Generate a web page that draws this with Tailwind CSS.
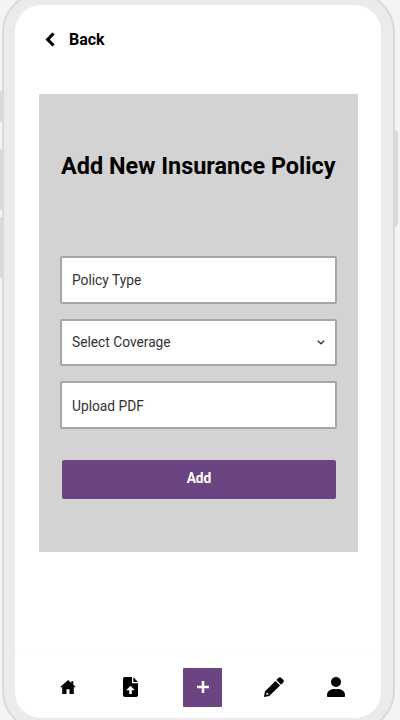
<!DOCTYPE html>
<html lang="en">
<head>
  <meta charset="UTF-8">
  <meta name="viewport" content="width=device-width, initial-scale=1.0" />
  <title>Add New Insurance Policy</title>
  <script src="https://cdn.jsdelivr.net/npm/@tailwindcss/browser@4"></script>
</head>
<body class="bg-[#f4f4f4] font-['Roboto',sans-serif] text-black">
  <div class="relative w-[400px] h-[720px] overflow-hidden">
    <!-- Side buttons of the phone -->
    <div class="absolute left-0 top-[91px] w-[2px] h-[31px] bg-[#dadada]"></div>
    <div class="absolute left-0 top-[149px] w-[2px] h-[61px] bg-[#dadada]"></div>
    <div class="absolute left-0 top-[217px] w-[2px] h-[61px] bg-[#dadada]"></div>
    <div class="absolute left-[394px] top-[130px] w-[4px] h-[97px] rounded-r-sm bg-[#dadada]"></div>

    <div class="relative -mt-2 ml-0.5 w-[393px] h-[739px] px-[11px] pt-[11px] border-2 border-[#dadada] rounded-[40px] bg-[#ebebeb]">
      <div class="flex flex-col w-[366px] h-[713px] rounded-[26px] bg-white">
        <header class="flex items-center h-[69px] pl-[30px]">
          <svg class="w-[10px] h-[15px]" viewBox="0 0 10 15" fill="none" stroke="currentColor" stroke-width="3.2">
            <path d="M8.5 1.5 2.7 7.5l5.8 6" />
          </svg>
          <a href="#" class="ml-[14px] text-[16px] leading-none font-bold">Back</a>
        </header>

        <main class="mt-5 ml-6 w-[318.5px] h-[458px] rounded-[1px] bg-[#d3d3d3] px-[21px]">
          <h1 class="pt-[58px] h-[162px] text-[23.45px] leading-7 font-bold text-center whitespace-nowrap">Add New Insurance Policy</h1>
          <form onsubmit="return false;">
            <div class="flex items-center h-[47.5px] px-[10px] pt-[2px] border-2 border-[#a6a6a6] rounded-[2px] bg-white text-[13.75px] text-[#333]">Policy Type</div>
            <div class="flex items-center justify-between mt-[15px] h-[47.5px] px-[10px] border-2 border-[#a6a6a6] rounded-[2px] bg-white text-[13.75px] text-[#333]">
              <span>Select Coverage</span>
              <svg class="w-[8px] h-[5px]" viewBox="0 0 8 5" fill="none" stroke="currentColor" stroke-width="1.3">
                <path d="M.8.8 4 3.8 7.2.8" />
              </svg>
            </div>
            <div class="flex items-center mt-[15px] h-[47.5px] px-[10px] pt-[3px] border-2 border-[#a6a6a6] rounded-[2px] bg-white text-[13.75px] text-[#333]">Upload PDF</div>
            <button type="submit" class="block mt-[31px] ml-[2px] w-[274px] h-[39px] rounded-[2px] bg-[#6b4482] text-white text-[13.75px] leading-none font-bold">Add</button>
          </form>
        </main>

        <nav class="mt-auto h-[63px] border-t border-[#fcfcfc] flex items-center pl-[45px]">
          <svg class="w-[16px] h-[14px]" viewBox="0 0 16 14" fill="currentColor">
            <path d="M8 0 0 7.3h2.2V14h4.3V9.3h3V14h4.3V7.3H16L13.3 4.8V1.3h-2v1.7z" />
          </svg>
          <svg class="ml-[47px] w-[15px] h-[20px]" viewBox="0 0 15 20" fill="currentColor">
            <path fill-rule="evenodd" d="M1.8 0H9v6.2h6V18.2q0 1.8-1.8 1.8H1.8Q0 20 0 18.2V1.8Q0 0 1.8 0zM7.5 8.8 3.2 13.2h3V17h2.6v-3.8h3z" />
            <path d="M10.3.2 15 5H10.3z" />
          </svg>
          <a href="#" class="ml-[45px] flex items-center justify-center w-[39px] h-[39px] rounded-[1px] bg-[#6b4482] text-white">
            <svg class="w-[12px] h-[12px]" viewBox="0 0 12 12" fill="none" stroke="currentColor" stroke-width="2.6">
              <path d="M6 0v12M0 6h12" />
            </svg>
          </a>
          <svg class="ml-[42px] w-[20px] h-[20px]" viewBox="0 0 20 20" fill="currentColor">
            <path fill-rule="evenodd" d="M11.4 3.9 16.1 8.6 5.2 19 0 20l.9-5.6zM2.6 15.6l-.4 2.2 2.2-.4-.1-1.2-1.1-.1z" />
            <path d="M12.3 3 14.6.8q1.3-1.2 2.6 0l2 2q1.2 1.3 0 2.6L17 7.7z" />
          </svg>
          <svg class="ml-[43px] w-[18px] h-[20px]" viewBox="0 0 18 20" fill="currentColor">
            <circle cx="9" cy="5" r="5" />
            <path d="M.8 20Q0 20 0 19.2V18C0 14.3 3.4 12 7 12h4c3.6 0 7 2.3 7 6v1.2q0 .8-.8.8z" />
          </svg>
        </nav>
      </div>
    </div>
  </div>
</body>
</html>
